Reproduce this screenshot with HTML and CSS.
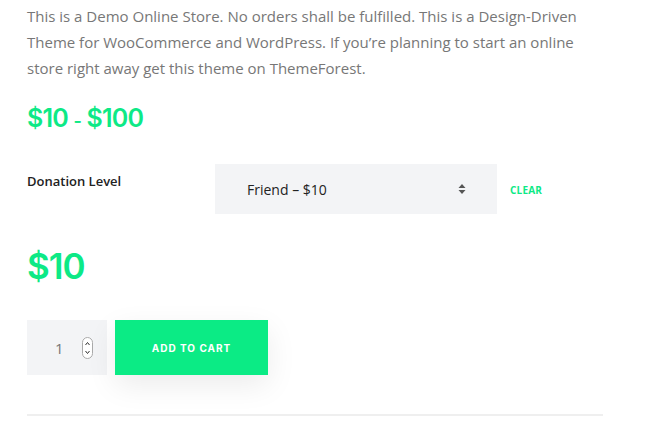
FILE: index.html
```html
<!DOCTYPE html>
<html>
<head>
<meta charset="utf-8">
<link rel="stylesheet" href="styles.css">
</head>
<body>
<div class="product">
  <p class="desc">This is a Demo Online Store. No orders shall be fulfilled. This is a Design-Driven Theme for WooCommerce and WordPress. If you’re planning to start an online store right away get this theme on ThemeForest.</p>
  <div class="price-range">$10 <span class="dash">-</span> $100</div>
  <div class="variation">
    <div class="label">Donation Level</div>
    <div class="select">
      <span>Friend – $10</span>
      <svg class="arrows" width="8" height="12" viewBox="0 0 8 12"><path d="M4 1 L7.5 5 H0.5 Z M4 11 L7.5 7 H0.5 Z" fill="#555"/></svg>
    </div>
    <div class="clear">CLEAR</div>
  </div>
  <div class="price">$10</div>
  <div class="cart">
    <div class="qty">
      <span class="num">1</span>
      <span class="spin">
        <svg width="11" height="22" viewBox="0 0 11 22"><rect x="0.5" y="0.5" width="10" height="21" rx="5" fill="#fff" stroke="#aaa"/><path d="M3.5 8 L5.5 5.5 L7.5 8" fill="none" stroke="#333" stroke-width="1"/><path d="M3.5 14 L5.5 16.5 L7.5 14" fill="none" stroke="#333" stroke-width="1"/></svg>
      </span>
    </div>
    <div class="btn">ADD TO CART</div>
  </div>
  <div class="rule"></div>
</div>
</body>
</html>
```
FILE: styles.css
```css
html, body { margin: 0; padding: 0; background: #fff; }
body { font-family: "Open Sans", "Liberation Sans", sans-serif; }
.product { padding: 0 52px 0 27px; width: 576px; }
.desc {
  margin: 0;
  padding-top: 3px;
  font-size: 15px;
  line-height: 26px;
  color: #777;
  width: 560px;
}
.price-range {
  margin-top: 22px;
  font-family: Inter, "Liberation Sans", sans-serif;
  font-weight: 600;
  font-size: 25px;
  letter-spacing: -0.8px;
  color: #0de986;
  line-height: 30px;
}
.price-range .dash { font-size: 18px; }
.variation {
  display: flex;
  align-items: flex-start;
  margin-top: 28px;
}
.label {
  width: 188px;
  font-size: 13px;
  font-weight: 600;
  color: #222;
  padding-top: 8px;
  line-height: 18px;
}
.select {
  width: 282px;
  height: 50px;
  background: #f3f4f6;
  display: flex;
  align-items: center;
  justify-content: space-between;
  padding: 0 32px;
  box-sizing: border-box;
  font-size: 14px;
  color: #222;
}
.select .arrows { margin-right: -1px; }
.clear {
  margin-left: 13px;
  font-size: 10px;
  font-weight: 700;
  color: #0de986;
  line-height: 52px;
  letter-spacing: 0.2px;
}
.price {
  margin-top: 28px;
  font-family: Inter, "Liberation Sans", sans-serif;
  font-weight: 600;
  font-size: 35px;
  letter-spacing: -1px;
  color: #0de986;
  line-height: 44px;
}
.cart {
  display: flex;
  gap: 8px;
  margin-top: 32px;
}
.qty {
  width: 80px;
  height: 55px;
  background: #f3f4f6;
  display: flex;
  align-items: center;
  box-sizing: border-box;
  padding-left: 28px;
}
.qty .num { font-size: 15px; color: #777; width: 27px; }
.qty .spin { display: flex; }
.btn {
  width: 153px;
  height: 55px;
  background: #0beb85;
  color: #fff;
  font-family: Inter, "Liberation Sans", sans-serif;
  font-weight: 700;
  font-size: 10px;
  letter-spacing: 1px;
  display: flex;
  align-items: center;
  justify-content: center;
  box-shadow: 0 10px 30px rgba(0,0,0,0.08);
}
.rule {
  margin-top: 39px;
  height: 2px;
  background: #efefef;
  width: 576px;
}
```
